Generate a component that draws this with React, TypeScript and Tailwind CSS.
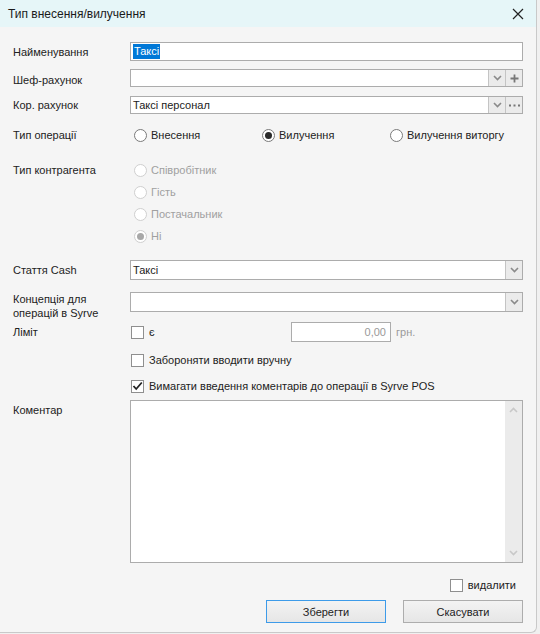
import React from 'react'

const font = { fontFamily: '"Liberation Sans", Arial, sans-serif' }

function Chevron({ up }: { up?: boolean }) {
  return (
    <svg width="9" height="6" viewBox="0 0 9 6" className={up ? 'rotate-180' : ''}>
      <path d="M1 1 L4.5 4.5 L8 1" fill="none" stroke="currentColor" strokeWidth="1.6" />
    </svg>
  )
}

function DropBtn() {
  return (
    <div className="w-[17px] h-full flex items-center justify-center bg-[#ebebeb] border-l border-[#c4c4c4] text-[#8a8a8a]">
      <Chevron />
    </div>
  )
}

function Radio({ label, checked, disabled }: { label: string; checked?: boolean; disabled?: boolean }) {
  return (
    <div className="flex items-center gap-[4px]">
      <span
        className={
          'w-[13px] h-[13px] rounded-full border bg-white flex items-center justify-center ' +
          (disabled ? 'border-[#cfcfcf]' : 'border-[#7a7a7a]')
        }
      >
        {checked && <span className={'w-[7px] h-[7px] rounded-full ' + (disabled ? 'bg-[#a8a8a8]' : 'bg-[#2a2a2a]')} />}
      </span>
      <span className={disabled ? 'text-[#a0a0a0]' : 'text-[#222]'}>{label}</span>
    </div>
  )
}

function Check({ label, checked }: { label: string; checked?: boolean }) {
  return (
    <div className="flex items-center gap-[5px]">
      <span className="w-[13px] h-[13px] border border-[#8f8f8f] bg-white flex items-center justify-center">
        {checked && (
          <svg width="11" height="10" viewBox="0 0 11 10">
            <path d="M1.5 5 L4.2 8 L9.8 1.5" fill="none" stroke="#222" strokeWidth="1.8" />
          </svg>
        )}
      </span>
      <span className="text-[#222]">{label}</span>
    </div>
  )
}

function Row({ label, children, className }: { label: React.ReactNode; children?: React.ReactNode; className?: string }) {
  return (
    <div className={'flex ' + (className ?? '')}>
      <div className="w-[117px] shrink-0 text-[#222] leading-[14px]">{label}</div>
      <div className="flex-1">{children}</div>
    </div>
  )
}

export default function App() {
  return (
    <div className="w-[540px] h-[634px] bg-[#f0f0f0] text-[11px] leading-[14px]" style={font}>
      <div className="w-[537px] h-[633px] bg-[#f5f5f5] border-r border-b border-[#c9c9c9] rounded-br-[6px] flex flex-col overflow-hidden">
        <div className="h-[27px] shrink-0 bg-[#e6f6f8] flex items-center justify-between pl-[8px] pr-[12px]">
          <span className="text-[#1a1a1a] text-[12px]">Тип внесення/вилучення</span>
          <svg width="12" height="12" viewBox="0 0 12 12">
            <path d="M1 1 L11 11 M11 1 L1 11" stroke="#222" strokeWidth="1.2" />
          </svg>
        </div>

        <div className="pl-[13px] pr-[13px] flex flex-col">
          <Row label={<span className="flex h-[19px] items-center pt-[1px]">Найменування</span>} className="mt-[15px]">
            <div className="h-[19px] border border-[#acacac] bg-white flex items-center pl-[2px]">
              <span className="bg-[#0078d7] text-white px-[1px] leading-[15px]">Таксі</span>
            </div>
          </Row>

          <Row label={<span className="flex h-[18px] items-center pt-[3px]">Шеф-рахунок</span>} className="mt-[8px]">
            <div className="h-[18px] border border-[#acacac] bg-white flex">
              <div className="flex-1" />
              <DropBtn />
              <div className="w-[17px] h-full flex items-center justify-center bg-[#ebebeb] border-l border-[#c4c4c4]">
                <svg width="9" height="9" viewBox="0 0 9 9">
                  <path d="M4.5 0.5 V8.5 M0.5 4.5 H8.5" stroke="#777" strokeWidth="1.8" />
                </svg>
              </div>
            </div>
          </Row>

          <Row label={<span className="flex h-[18px] items-center">Кор. рахунок</span>} className="mt-[9px]">
            <div className="h-[18px] border border-[#acacac] bg-white flex">
              <div className="flex-1 flex items-center pl-[2px] text-[#222]">Таксі персонал</div>
              <DropBtn />
              <div className="w-[17px] h-full flex items-center justify-center bg-[#ebebeb] border-l border-[#c4c4c4]">
                <svg width="11" height="3" viewBox="0 0 11 3">
                  <rect x="0" y="0.5" width="2" height="2" fill="#777" />
                  <rect x="4.5" y="0.5" width="2" height="2" fill="#777" />
                  <rect x="9" y="0.5" width="2" height="2" fill="#777" />
                </svg>
              </div>
            </div>
          </Row>

          <Row label={<span className="flex h-[14px] items-center">Тип операції</span>} className="mt-[14px]">
            <div className="h-[14px] flex items-center pl-[4px]">
              <div className="w-[128px]"><Radio label="Внесення" /></div>
              <div className="w-[128px]"><Radio label="Вилучення" checked /></div>
              <Radio label="Вилучення виторгу" />
            </div>
          </Row>

          <Row label={<span className="flex h-[14px] items-center">Тип контрагента</span>} className="mt-[21px]">
            <div className="flex flex-col gap-[8px] pl-[4px]">
              <div className="h-[14px] flex items-center"><Radio label="Співробітник" disabled /></div>
              <div className="h-[14px] flex items-center"><Radio label="Гість" disabled /></div>
              <div className="h-[14px] flex items-center"><Radio label="Постачальник" disabled /></div>
              <div className="h-[14px] flex items-center"><Radio label="Ні" disabled checked /></div>
            </div>
          </Row>

          <Row label={<span className="flex h-[20px] items-center">Стаття Cash</span>} className="mt-[17px]">
            <div className="h-[20px] border border-[#acacac] bg-white flex">
              <div className="flex-1 flex items-center pl-[2px] text-[#222]">Таксі</div>
              <DropBtn />
            </div>
          </Row>

          <Row label={<span className="block">Концепція для<br />операцій в Syrve</span>} className="mt-[12px]">
            <div className="h-[20px] border border-[#acacac] bg-white flex">
              <div className="flex-1" />
              <DropBtn />
            </div>
          </Row>

          <Row label={<span className="flex h-[14px] items-center">Ліміт</span>} className="mt-[5px]">
            <div className="h-[14px] flex items-center pl-[1px] relative">
              <Check label="є" />
              <div className="absolute left-[161px] -top-[3px] flex items-center gap-[5px]">
                <div className="w-[100px] h-[20px] border border-[#acacac] bg-white flex items-center justify-end pr-[4px] text-[#9a9a9a]">0,00</div>
                <span className="text-[#9a9a9a]">грн.</span>
              </div>
            </div>
          </Row>

          <Row label="" className="mt-[14px]">
            <div className="h-[14px] flex items-center pl-[1px]"><Check label="Забороняти вводити вручну" /></div>
          </Row>

          <Row label="" className="mt-[12px]">
            <div className="h-[14px] flex items-center pl-[1px]"><Check label="Вимагати введення коментарів до операції в Syrve POS" checked /></div>
          </Row>

          <Row label={<span className="block pt-[3px]">Коментар</span>} className="mt-[7px]">
            <div className="h-[163px] border border-[#acacac] bg-white flex">
              <div className="flex-1" />
              <div className="w-[17px] h-full bg-[#ebebeb] flex flex-col items-center justify-between py-[6px] text-[#c8c8c8]">
                <Chevron up />
                <Chevron />
              </div>
            </div>
          </Row>

          <div className="mt-[15px] h-[14px] flex justify-end pr-[7px]">
            <Check label="видалити" />
          </div>

          <div className="mt-[8px] flex justify-end gap-[17px]">
            <button className="w-[120px] h-[23px] border border-[#3d9be9] bg-gradient-to-b from-[#f3f3f3] to-[#e6e6e6] text-[#222]">Зберегти</button>
            <button className="w-[120px] h-[23px] border border-[#adadad] bg-gradient-to-b from-[#f3f3f3] to-[#e6e6e6] text-[#222]">Скасувати</button>
          </div>
        </div>
      </div>
    </div>
  )
}
